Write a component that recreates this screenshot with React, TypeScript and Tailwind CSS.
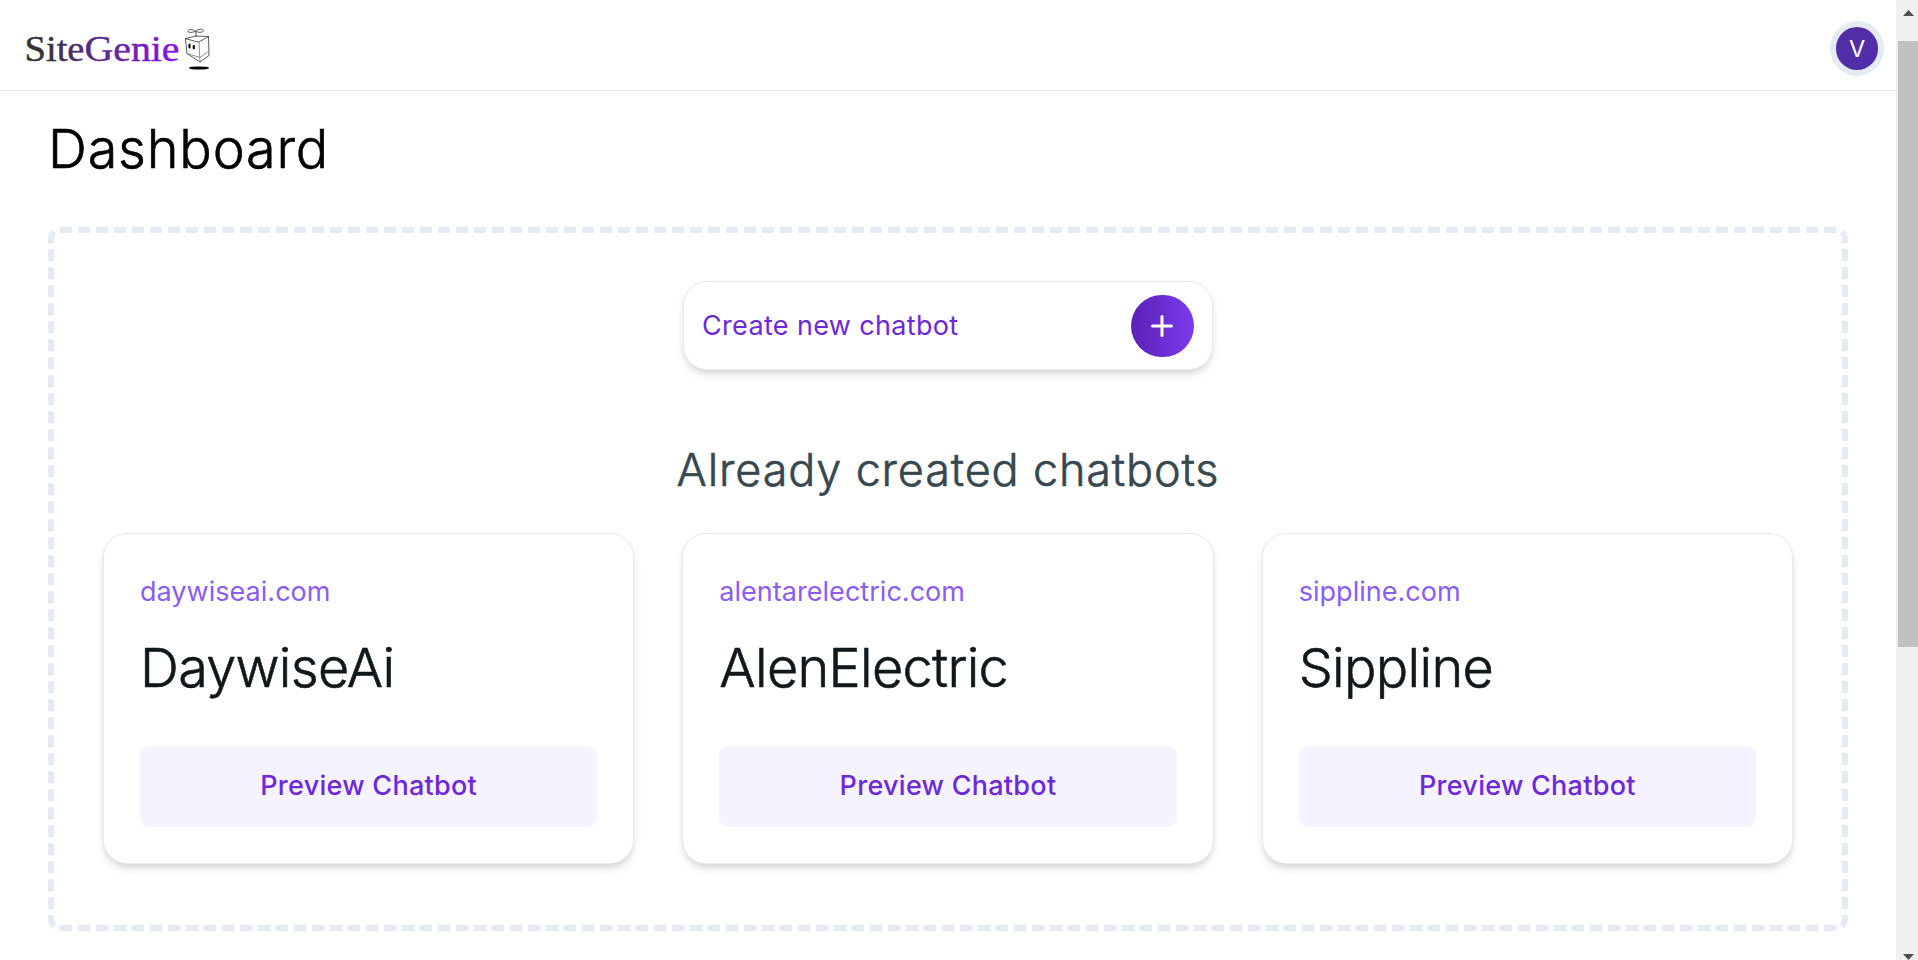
const bots = [
  { domain: "daywiseai.com", name: "DaywiseAi" },
  { domain: "alentarelectric.com", name: "AlenElectric" },
  { domain: "sippline.com", name: "Sippline" },
];

function Mascot() {
  return (
    <svg width="28" height="44" viewBox="0 0 28 44" fill="none" stroke="#333" strokeWidth="0.8" strokeLinejoin="round" strokeLinecap="round">
      <path d="M11.5 3.3C9 .8 4 1.2 4 3.2s5 1.2 7.500.1c2.500-2 7.500-3 8 -1s-5 3-8 1z" />
      <path d="M11.800 3.800l.3 4.700" />
      <path d="M1.500 10.500L12 8l12.500.5L15 14z" />
      <path d="M1.500 10.500L3 25.500 16 34l9-6.500-.5-19" />
      <path d="M15 14l1 20M3 25.500l13 4 9-6.500" stroke="#777" />
      <ellipse cx="5.500" cy="18" rx="1.200" ry="2.700" fill="#111" stroke="none" />
      <ellipse cx="9.800" cy="19" rx="1.200" ry="2.500" fill="#111" stroke="none" />
      <ellipse cx="15" cy="40" rx="10.200" ry="1.600" fill="#050505" stroke="none" />
    </svg>
  );
}

function Logo() {
  return (
    <a className="flex items-start gap-1 pt-[28px] pl-[24px]">
      <svg width="156" height="44" viewBox="0 0 156 44" className="font-['Liberation_Serif',serif] text-[36px]">
        <defs>
          <linearGradient id="wordmark" gradientUnits="userSpaceOnUse" x1="0" y1="0" x2="156" y2="0">
            <stop offset="0.1" stopColor="#333333" />
            <stop offset="0.5" stopColor="#5b2a93" />
            <stop offset="1" stopColor="#8b0ff0" />
          </linearGradient>
        </defs>
        <g fill="url(#wordmark)" stroke="url(#wordmark)" strokeWidth="0.4">
          <text x="0.5" y="32.500" textLength="60" lengthAdjust="spacingAndGlyphs">Site</text>
          <text x="60.5" y="32.500" textLength="95" lengthAdjust="spacingAndGlyphs">Genie</text>
        </g>
      </svg>
      <Mascot />
    </a>
  );
}

function BotCard({ domain, name }: { domain: string; name: string }) {
  return (
    <article className="flex h-[331px] flex-col rounded-[24px] border border-[#e4ebf4] bg-white px-[36px] pt-[37px] shadow-[0_6px_9px_-1px_rgba(0,0,0,0.1),0_3px_6px_-2px_rgba(0,0,0,0.1)]">
      <p className="text-[27px] leading-[42px] tracking-[0.030px] text-[#8b5cf6]">{domain}</p>
      <h3 className="mt-[25px] text-[54px] leading-[60px] font-light tracking-[-0.700px] text-[#11181c] [-webkit-text-stroke:0.6px_#11181c]">{name}</h3>
      <button className="mt-[48px] h-[81px] rounded-[9px] bg-[#f5f3ff] text-[27px] font-medium tracking-[0.270px] text-[#6d28d9]">
        Preview Chatbot
      </button>
    </article>
  );
}

function Scrollbar() {
  return (
    <div className="flex w-[22px] shrink-0 flex-col bg-[#f0f0f0]">
      <div className="flex h-[41px] justify-end">
        <svg width="20" height="41" viewBox="0 0 20 41"><path d="M5 16L10.500 10 16 16z" fill="#505050" /></svg>
      </div>
      <div className="ml-[2px] h-[606px] bg-[#c1c1c1]" />
      <div className="mt-auto flex h-[20px] justify-end">
        <svg width="20" height="20" viewBox="0 0 20 20"><path d="M5 14L10.500 20 16 14z" fill="#505050" /></svg>
      </div>
    </div>
  );
}

export default function App() {
  return (
    <div className="flex h-[960px] w-[1918px] overflow-hidden bg-white font-['Inter',sans-serif]">
      <div className="flex w-[1896px] flex-col">
        <header className="flex h-[91px] shrink-0 justify-between border-b border-[#e4eaf5]">
          <Logo />
          <div className="mt-[21px] mr-[12px] flex h-[55px] w-[54px] items-center justify-center rounded-full bg-[#e4ebf3]">
            <div className="flex h-[43px] w-[42px] items-center justify-center rounded-full bg-[#512da8] text-[23.500px] font-normal text-white">V</div>
          </div>
        </header>
        <main className="px-[48px] pt-[28px]">
          <h1 className="text-[54px] leading-[60px] font-light tracking-[0.800px] text-black [-webkit-text-stroke:0.6px_black]">Dashboard</h1>
          <section className="mt-[48px] h-[704px] rounded-[12px] border-[6px] border-dashed border-[#e4ebf3] px-[49px] pt-[48px]">
            <button className="mx-auto flex h-[89px] w-[530px] items-center justify-between rounded-[24px] border border-[#e4ebf4] bg-white px-[18px] shadow-[0_6px_9px_-1px_rgba(0,0,0,0.1),0_3px_6px_-2px_rgba(0,0,0,0.1)]">
              <span className="pt-px text-[27px] tracking-[0.340px] text-[#6d28d9]">Create new chatbot</span>
              <span className="flex h-[62px] w-[63px] items-center justify-center rounded-full bg-linear-to-r from-[#5b21b6] to-[#7c3aed]">
                <svg width="24" height="24" viewBox="0 0 24 24" stroke="white" strokeWidth="3" strokeLinecap="round"><path d="M11 2.500v19M1.500 12h19" /></svg>
              </span>
            </button>
            <h2 className="mt-[73px] text-center text-[45px] leading-[54px] font-light tracking-[0.830px] text-[#37474f] [-webkit-text-stroke:0.6px_#37474f]">Already created chatbots</h2>
            <div className="mt-[36px] grid grid-cols-3 gap-[48px]">
              {bots.map((bot) => (
                <BotCard key={bot.domain} domain={bot.domain} name={bot.name} />
              ))}
            </div>
          </section>
        </main>
      </div>
      <Scrollbar />
    </div>
  );
}
